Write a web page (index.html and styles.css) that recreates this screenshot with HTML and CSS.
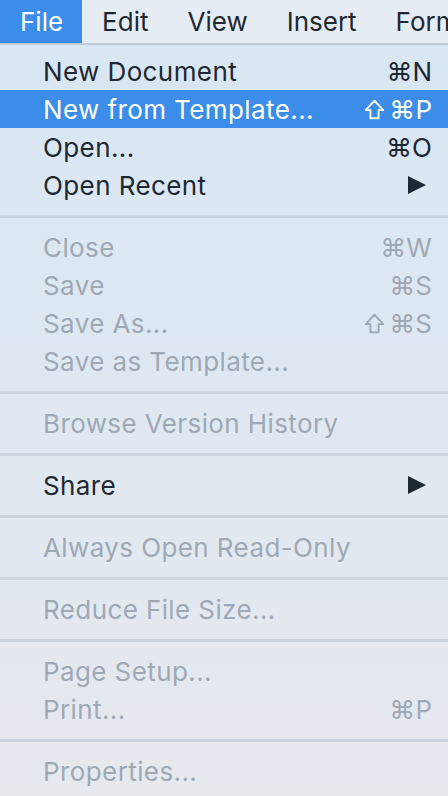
FILE: index.html
```html
<!DOCTYPE html>
<html lang="en">
<head>
  <meta charset="UTF-8">
  <meta name="viewport" content="width=device-width, initial-scale=1.0">
  <title>File menu</title>
  <link rel="stylesheet" href="styles.css">
</head>
<body>
  <div class="menubar">
    <span class="menubar-item active">File</span>
    <span class="menubar-item">Edit</span>
    <span class="menubar-item">View</span>
    <span class="menubar-item">Insert</span>
    <span class="menubar-item">Format</span>
  </div>

  <div class="menu">
    <div class="item"><span>New Document</span><span class="key">&#8984;N</span></div>
    <div class="item selected">
      <span>New from Template...</span>
      <span class="key">
        <svg class="shift" viewBox="0 0 18 18"><path d="M9 1.5 L16.5 9.5 H12.5 V16.5 H5.5 V9.5 H1.5 Z"/></svg>&#8984;P
      </span>
    </div>
    <div class="item"><span>Open...</span><span class="key">&#8984;O</span></div>
    <div class="item"><span>Open Recent</span><span class="arrow"></span></div>

    <div class="sep"></div>

    <div class="item disabled"><span>Close</span><span class="key">&#8984;W</span></div>
    <div class="item disabled"><span>Save</span><span class="key">&#8984;S</span></div>
    <div class="item disabled">
      <span>Save As...</span>
      <span class="key">
        <svg class="shift" viewBox="0 0 18 18"><path d="M9 1.5 L16.5 9.5 H12.5 V16.5 H5.5 V9.5 H1.5 Z"/></svg>&#8984;S
      </span>
    </div>
    <div class="item disabled"><span>Save as Template...</span></div>

    <div class="sep"></div>

    <div class="item disabled"><span>Browse Version History</span></div>

    <div class="sep"></div>

    <div class="item"><span>Share</span><span class="arrow"></span></div>

    <div class="sep"></div>

    <div class="item disabled"><span>Always Open Read-Only</span></div>

    <div class="sep"></div>

    <div class="item disabled"><span>Reduce File Size...</span></div>

    <div class="sep"></div>

    <div class="item disabled"><span>Page Setup...</span></div>
    <div class="item disabled"><span>Print...</span><span class="key">&#8984;P</span></div>

    <div class="sep"></div>

    <div class="item disabled"><span>Properties...</span></div>
  </div>
</body>
</html>
```

FILE: styles.css
```css
html, body {
  height: 100%;
}
body {
  margin: 0;
  font-family: 'Inter', 'DejaVu Sans', sans-serif;
  font-size: 26px;
  letter-spacing: 0.4px;
  color: #1e2833;
  background: linear-gradient(180deg, #d8e6f3 0%, #dfe8f1 50%, #e6e9ee 100%);
  overflow: hidden;
}
.menubar {
  display: flex;
  height: 43px;
  background-color: #e5ecf3;
  border-bottom: 2px solid #bfcad6;
  overflow: hidden;
  letter-spacing: 0;
}
.menubar-item {
  display: flex;
  align-items: center;
  padding: 0 19px 0 20px;
  white-space: nowrap;
}
.menubar-item.active {
  background-color: #3b8de9;
  color: white;
}
.menu {
  padding-top: 7px;
}
.item {
  display: flex;
  align-items: center;
  justify-content: space-between;
  height: 38px;
  padding: 0 16px 0 43px;
  white-space: nowrap;
}
.item.selected {
  background-color: #3b8de9;
  color: white;
}
.item.disabled {
  color: #9ea9b5;
}
.key {
  display: flex;
  align-items: center;
  letter-spacing: 0;
}
.shift {
  width: 21px;
  height: 21px;
  margin-right: 4px;
  fill: none;
  stroke: currentColor;
  stroke-width: 1.6;
  stroke-linejoin: round;
}
.arrow {
  width: 0;
  height: 0;
  margin-right: 6px;
  border-left: 18px solid #1e2833;
  border-top: 9px solid transparent;
  border-bottom: 9px solid transparent;
}
.sep {
  height: 24px;
  display: flex;
  align-items: center;
}
.sep::after {
  content: '';
  display: block;
  width: 100%;
  height: 3px;
  background-color: #ccd5de;
}
```
